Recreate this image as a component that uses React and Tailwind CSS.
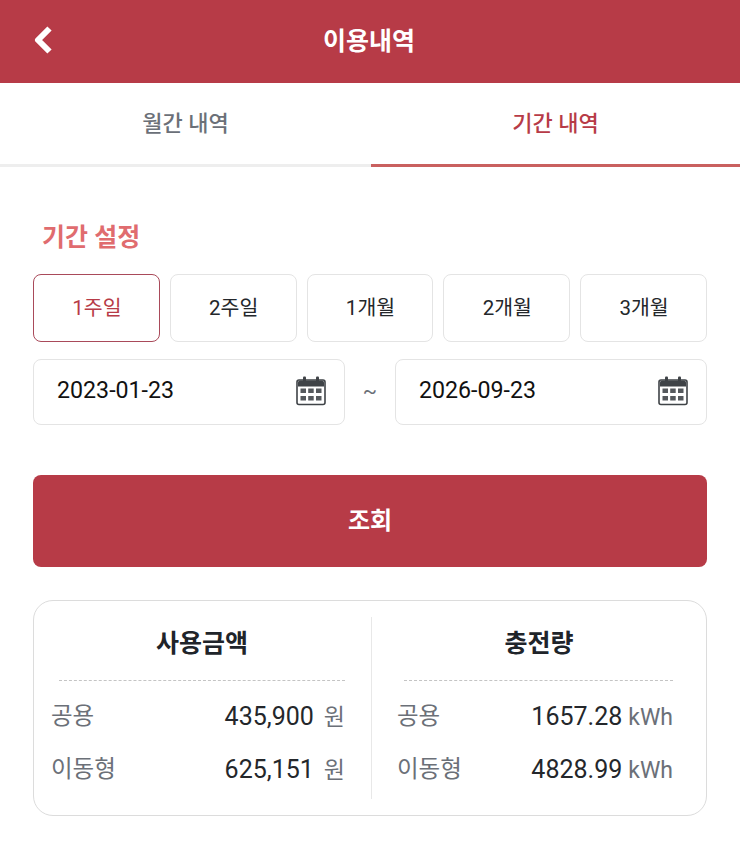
const FONT = 'font-["Roboto","Noto_Sans_CJK_KR",sans-serif]';

const periods = ['1주일', '2주일', '1개월', '2개월', '3개월'];

function CalendarIcon() {
  return (
    <svg width="30" height="30" viewBox="0 0 30 30" className="shrink-0">
      <rect x="7" y="0.5" width="3" height="6" rx="1" fill="#3f4347" />
      <rect x="20" y="0.5" width="3" height="6" rx="1" fill="#3f4347" />
      <path d="M2 6.5a2 2 0 0 1 2-2h22a2 2 0 0 1 2 2v4H2z" fill="#3f4347" />
      <rect x="1" y="4" width="28" height="24.5" rx="2" fill="none" stroke="#3f4347" strokeWidth="1.6" />
      <rect x="4.5" y="12.5" width="5.5" height="4.5" fill="#55595d" />
      <rect x="12.2" y="12.5" width="5.5" height="4.5" fill="#55595d" />
      <rect x="20" y="12.5" width="5.5" height="4.5" fill="#55595d" />
      <rect x="4.5" y="20" width="5.5" height="4.5" fill="#55595d" />
      <rect x="12.2" y="20" width="5.5" height="4.5" fill="#55595d" />
      <rect x="20" y="20" width="5.5" height="4.5" fill="#55595d" />
    </svg>
  );
}

function DateField({ value }) {
  return (
    <div className="flex h-[66px] w-[312px] items-center justify-between rounded-lg border-[1.5px] border-[#e4e4e4] pb-[2px] pl-[23px] pr-[18px]">
      <span className="pb-[2px] text-[23.2px] text-[#111]">{value}</span>
      <CalendarIcon />
    </div>
  );
}

function SummaryRow({ label, value, unit, unitClass }) {
  return (
    <div className="flex h-[53px] items-center justify-between">
      <span className="text-[23.5px] text-[#6b7078]">{label}</span>
      <span className="flex items-baseline">
        <span className="text-[25px] text-[#24272b]">{value}</span>
        <span className={`text-[23px] text-[#6b7078] ${unitClass}`}>{unit}</span>
      </span>
    </div>
  );
}

function SummaryColumn({ title, rows, unit, className, unitClass, dashClass, titleClass }) {
  return (
    <div className={`flex flex-col ${className}`}>
      <div className={`flex h-[63px] items-center justify-center pb-[9px] text-[25px] font-bold text-[#20242a] ${titleClass}`}>{title}</div>
      <div className={`mb-[9px] border-t border-dashed border-[#c4c4c4] ${dashClass}`} />
      {rows.map((row) => (
        <SummaryRow key={row.label} label={row.label} value={row.value} unit={unit} unitClass={unitClass} />
      ))}
    </div>
  );
}

export default function App() {
  return (
    <div className={`h-[846px] w-[740px] overflow-hidden bg-white ${FONT}`}>
      {/* 헤더 */}
      <header className="relative flex h-[83px] items-center justify-center bg-[#b73b47]">
        <svg width="20" height="28" viewBox="0 0 20 28" className="absolute left-[33px] top-[26px]">
          <polyline points="16.5,2.5 5,14 16.5,25.5" fill="none" stroke="white" strokeWidth="6" strokeLinejoin="round" />
        </svg>
        <h1 className="pr-[2px] text-[25px] font-bold text-white">이용내역</h1>
      </header>

      {/* 탭 */}
      <div className="flex h-[84px]">
        <div className="flex w-[371px] items-center justify-center border-b-[3px] border-[#eeeeee] text-[22px] font-medium text-[#6b7078]">
          월간 내역
        </div>
        <div className="flex flex-1 items-center justify-center border-b-[3px] border-[#c9605f] text-[22px] font-medium text-[#b73b47]">
          기간 내역
        </div>
      </div>

      <main className="px-[33px]">
        <h2 className="mt-[53px] pl-[9px] text-[25px] font-bold leading-[36px] text-[#e06c6f]">기간 설정</h2>

        <div className="mt-[18px] flex gap-[10px]">
          {periods.map((period, i) => (
            <button
              key={period}
              className={`h-[68px] flex-1 rounded-lg border-[1.5px] pl-[1px] pt-[1px] text-[20.5px] ${
                i === 0 ? 'border-[#a94a5a] text-[#b73b47]' : 'border-[#e4e4e4] text-[#24272b]'
              }`}
            >
              {period}
            </button>
          ))}
        </div>

        <div className="mt-[17px] flex items-center justify-between">
          <DateField value="2023-01-23" />
          <span className="text-[21px] text-[#6b7078]">~</span>
          <DateField value="2026-09-23" />
        </div>

        <button className="mt-[50px] h-[92px] w-full rounded-lg bg-[#b73b47] text-[24px] font-bold text-white">조회</button>

        {/* 합계 카드 */}
        <section className="mt-[33px] flex h-[216px] rounded-[20px] border-[1.5px] border-[#dcdcdc] py-4">
          <SummaryColumn
            title="사용금액"
            unit="원"
            unitClass="ml-[10px]"
            titleClass="pl-[8px]"
            className="w-[338px] border-r border-[#e8e8e8] pl-[17px] pr-[26px]"
            dashClass="ml-[8px]"
            rows={[
              { label: '공용', value: '435,900' },
              { label: '이동형', value: '625,151' },
            ]}
          />
          <SummaryColumn
            title="충전량"
            unit="kWh"
            unitClass="ml-[6px]"
            titleClass="pl-[8px]"
            className="flex-1 pl-[25px] pr-[33px]"
            dashClass="ml-[7px]"
            rows={[
              { label: '공용', value: '1657.28' },
              { label: '이동형', value: '4828.99' },
            ]}
          />
        </section>
      </main>
    </div>
  );
}
